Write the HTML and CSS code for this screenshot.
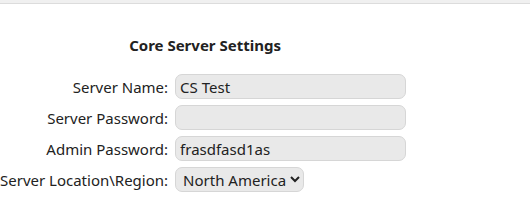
FILE: index.html
```html
<!DOCTYPE html>
<html lang="en">
<head>
    <meta charset="UTF-8">
    <title>Core Server Settings</title>
    <link rel="stylesheet" href="styles.css">
</head>
<body>
    <div class="topbar"></div>

    <table class="settings">
        <caption>Core Server Settings</caption>
        <tr>
            <td class="label">Server Name:</td>
            <td><input type="text" value="CS Test"></td>
        </tr>
        <tr>
            <td class="label">Server Password:</td>
            <td><input type="text" value=""></td>
        </tr>
        <tr>
            <td class="label">Admin Password:</td>
            <td><input type="text" value="frasdfasd1as"></td>
        </tr>
        <tr>
            <td class="label">Server Location\Region:</td>
            <td>
                <select>
                    <option>North America</option>
                    <option>Europe</option>
                    <option>Asia</option>
                </select>
            </td>
        </tr>
    </table>
</body>
</html>
```

FILE: styles.css
```css
body {
    margin: 0;
    font-family: "Noto Sans", "Open Sans", sans-serif;
    font-size: 15px;
    color: #222;
    background: #fff;
}
.topbar {
    height: 3px;
    background-color: #f0f0f0;
    border-bottom: 1px solid #dcdcdc;
}
.settings {
    margin-top: 31px;
    border-collapse: separate;
    border-spacing: 0;
}
.settings caption {
    font-weight: bold;
    font-size: 15px;
    color: #222;
    padding-bottom: 16px;
}
.settings td {
    padding: 3px 4px 3px 0;
}
.settings .label {
    text-align: right;
    white-space: nowrap;
    padding-right: 7px;
}
input, select {
    font-family: inherit;
    font-size: 15px;
    color: #222;
    background-color: #e9e9e9;
    border: 1px solid #d6d6d6;
    border-radius: 7px;
    height: 25px;
    box-sizing: border-box;
    padding: 0 4px;
    outline: none;
}
input {
    width: 231px;
}
select {
    padding: 0 0 0 3px;
}
```
